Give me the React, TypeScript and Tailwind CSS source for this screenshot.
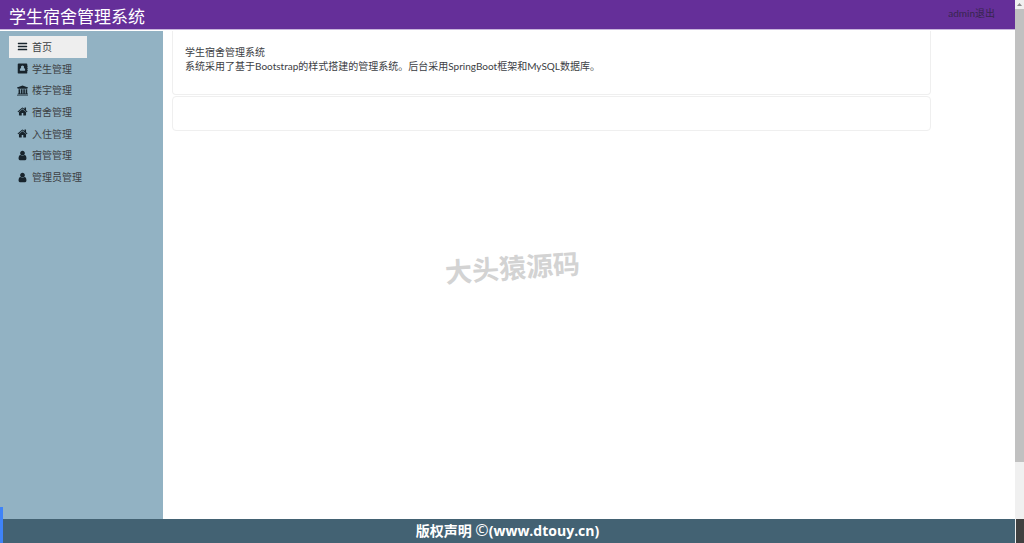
import { useState } from 'react';
import type { ReactNode } from 'react';

interface MenuItem {
  label: string;
  icon: ReactNode;
}

const iconProps = {
  viewBox: '0 0 1792 1792',
  className: 'w-[11px] h-[11px] shrink-0',
  fill: 'currentColor',
  'aria-hidden': true,
};

const BarsIcon = () => (
  <svg {...iconProps}>
    <rect x="128" y="288" width="1536" height="240" rx="64" />
    <rect x="128" y="780" width="1536" height="240" rx="64" />
    <rect x="128" y="1272" width="1536" height="240" rx="64" />
  </svg>
);

const AddressBookIcon = () => (
  <svg {...iconProps}>
    <path
      fillRule="evenodd"
      d="M280 64h1232q80 0 120 40t40 120v208h64v192h-64v144h64v192h-64v144h64v192h-64v272q0 80-40 120t-120 40H280q-80 0-120-40t-40-120V224q0-80 40-120t120-40zM896 400q-110 0-185 75t-75 185q0 90 50 160q-120 10-175 110t-55 230q0 100 90 100h700q90 0 90-100q0-130-55-230t-175-110q50-70 50-160q0-110-75-185t-185-75z"
    />
  </svg>
);

const UniversityIcon = () => (
  <svg {...iconProps}>
    <path d="M896 64l896 352v128h-128q0 26-20 45t-48 19H196q-28 0-48-19t-20-45H0V416zM256 672h256v704h128V672h256v704h128V672h256v704h128V672h256v704h52q28 0 48 19t20 45v64H128v-64q0-26 20-45t48-19h60zM1724 1568q28 0 48 19t20 45v96H0v-96q0-26 20-45t48-19z" />
  </svg>
);

const HomeIcon = () => (
  <svg {...iconProps}>
    <path d="M1472 992v480q0 26-19 45t-45 19h-384v-384h-256v384h-384q-26 0-45-19t-19-45v-480q0-1 .5-3t.5-3l575-474 575 474q1 2 1 6zm223-69l-62 74q-8 9-21 11h-3q-13 0-21-7l-692-577-692 577q-12 8-24 7-13-2-21-11l-62-74q-8-10-7-23.5t11-21.5l719-599q32-26 76-26t76 26l244 204v-195q0-14 9-23t23-9h192q14 0 23 9t9 23v408l219 182q10 8 11 21.5t-7 23.5z" />
  </svg>
);

const UserIcon = () => (
  <svg {...iconProps}>
    <path d="M1536 1399q0 109-62.5 187t-150.5 78h-854q-88 0-150.5-78t-62.5-187q0-85 8.5-160.5t31.5-152 58.5-131 94-89 134.5-34.5q131 128 313 128t313-128q76 0 134.5 34.5t94 89 58.5 131 31.5 152 8.5 160.5zm-256-887q0 159-112.5 271.5t-271.5 112.5-271.5-112.5-112.5-271.5 112.5-271.5 271.5-112.5 271.5 112.5 112.5 271.5z" />
  </svg>
);

const MENU: MenuItem[] = [
  { label: '首页', icon: <BarsIcon /> },
  { label: '学生管理', icon: <AddressBookIcon /> },
  { label: '楼宇管理', icon: <UniversityIcon /> },
  { label: '宿舍管理', icon: <HomeIcon /> },
  { label: '入住管理', icon: <HomeIcon /> },
  { label: '宿管管理', icon: <UserIcon /> },
  { label: '管理员管理', icon: <UserIcon /> },
];

export default function App() {
  const [active, setActive] = useState('首页');

  return (
    <div className="relative flex min-h-screen bg-white font-[Lato,'Noto_Sans_CJK_SC',sans-serif] text-[10px] leading-[14px] text-[#3c4044]">
      <div className="flex min-w-0 flex-1 flex-col">
        <header className="flex h-[30px] items-center justify-between border-b border-[#c9b5dc] bg-[#652f99] pr-5 pl-[9px]">
          <h1 className="pt-1 text-[17px] leading-6 whitespace-nowrap text-white">
            学生宿舍管理系统
          </h1>
          <a href="#logout" className="pb-1 text-[#37264e]">
            admin退出
          </a>
        </header>

        <div className="flex flex-1 pt-px">
          <nav className="w-[163px] shrink-0 bg-[#92b2c3] px-[9px] pt-[5px]">
            <ul className="grid h-[152px] auto-rows-fr">
              {MENU.map((item) => (
                <li key={item.label}>
                  <a
                    href="#menu"
                    onClick={() => setActive(item.label)}
                    className={`flex h-full w-[78px] items-center gap-1 pl-2 whitespace-nowrap ${
                      active === item.label ? 'bg-[#eeeeee]' : ''
                    }`}
                  >
                    <span className="text-[#18242c]">{item.icon}</span>
                    {item.label}
                  </a>
                </li>
              ))}
            </ul>
          </nav>

          <main className="flex-1 pl-[9px]">
            <div className="flex w-9/10 flex-col gap-px">
              <section className="h-16 rounded-b-sm border border-t-0 border-[#efefef] px-3 pt-[14px]">
                <p>学生宿舍管理系统</p>
                <p>
                  系统采用了基于Bootstrap的样式搭建的管理系统。后台采用SpringBoot框架和MySQL数据库。
                </p>
              </section>
              <section className="h-[35px] rounded-sm border border-[#efefef]" />
            </div>
          </main>
        </div>

        <footer className="flex h-6 items-center justify-center bg-[#436273] font-['Open_Sans','Noto_Sans_CJK_SC',sans-serif] text-sm font-bold text-white">
          <p>
            版权声明 <span className="text-base leading-4 font-medium">©</span>
            (www.dtouy.cn)
          </p>
        </footer>
      </div>

      {/* 滚动条 */}
      <div className="flex w-[9px] flex-col bg-[#f0f0f0]" aria-hidden="true">
        <svg viewBox="0 0 9 9" className="h-[9px] w-[9px]" fill="#8a8a8a">
          <path d="M4.5 3L7 6H2z" />
        </svg>
        <div className="h-5/6 bg-[#c1c1c1]" />
        <div className="mt-auto ml-px h-6 bg-[#404040]" />
      </div>

      {/* 水印 */}
      <div className="pointer-events-none absolute inset-0 flex items-center justify-center pb-2">
        <span className="-rotate-4 text-[27px] font-bold text-[#d3d3d3]">
          大头猿源码
        </span>
      </div>

      <div className="absolute bottom-0 left-0 h-9 w-[3px] bg-[#3f83f8]" />
    </div>
  );
}
